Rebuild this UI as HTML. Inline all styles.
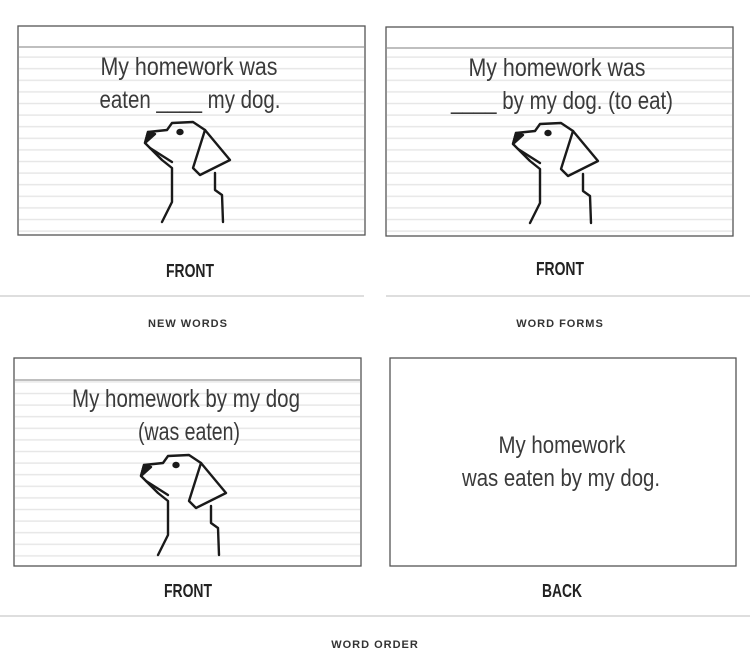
<!DOCTYPE html>
<html><head><meta charset="utf-8"><style>
html,body{margin:0;padding:0;background:#fff;}
svg{display:block}
.t{font-family:"Liberation Sans",sans-serif;fill:#3a3a3a;font-size:25px;text-anchor:middle}
.f{font-family:"Liberation Sans",sans-serif;font-weight:bold;fill:#222;font-size:18px;text-anchor:middle}
.s{font-family:"Liberation Sans",sans-serif;font-weight:bold;fill:#333;font-size:11px;text-anchor:middle;letter-spacing:1px}
.d{fill:none;stroke:#1a1a1a;stroke-width:2.4;stroke-linejoin:round;stroke-linecap:round}
</style></head><body>
<svg width="750" height="665" viewBox="0 0 750 665" xmlns="http://www.w3.org/2000/svg">
<defs>
<pattern id="ln" x="0" y="0" width="10" height="11.6" patternUnits="userSpaceOnUse">
<rect x="0" y="10" width="10" height="1.4" fill="#e6e6e6"/>
</pattern>
</defs>
<!-- card 1 -->
<rect x="18" y="26" width="347" height="209" fill="#fff" stroke="#555" stroke-width="1.3"/>
<rect x="19" y="48" width="345" height="186" fill="url(#ln)"/>
<line x1="19" y1="47" x2="364" y2="47" stroke="#aaa" stroke-width="1.5"/>
<text class="t" x="189" y="75" textLength="177" lengthAdjust="spacingAndGlyphs">My homework was</text>
<text class="t" x="190" y="108" textLength="181" lengthAdjust="spacingAndGlyphs">eaten ____ my dog.</text>
<g class="d">
<path d="M162 222 L172 202 L172 168 L162 160 L145 143 L148 132 L167 130 L172 123 L193 122 L205 130"/>
<path d="M205 130 L230 160 L200 175 L193 168 Z"/>
<path d="M215 173 L215 190 L222 195 L223 222"/>
<path d="M150 148 L172 162"/>
<path d="M145 143 L148 132 L155 134 Z" fill="#1a1a1a"/>
<ellipse cx="180" cy="132" rx="2.5" ry="2" fill="#1a1a1a"/>
</g>
<!-- card 2 -->
<rect x="386" y="27" width="347" height="209" fill="#fff" stroke="#555" stroke-width="1.3"/>
<rect x="387" y="49" width="345" height="186" fill="url(#ln)"/>
<line x1="387" y1="48" x2="732" y2="48" stroke="#aaa" stroke-width="1.5"/>
<text class="t" x="557" y="76" textLength="177" lengthAdjust="spacingAndGlyphs">My homework was</text>
<text class="t" x="562" y="109" textLength="222" lengthAdjust="spacingAndGlyphs">____ by my dog. (to eat)</text>
<g class="d" transform="translate(368,1)">
<path d="M162 222 L172 202 L172 168 L162 160 L145 143 L148 132 L167 130 L172 123 L193 122 L205 130"/>
<path d="M205 130 L230 160 L200 175 L193 168 Z"/>
<path d="M215 173 L215 190 L222 195 L223 222"/>
<path d="M150 148 L172 162"/>
<path d="M145 143 L148 132 L155 134 Z" fill="#1a1a1a"/>
<ellipse cx="180" cy="132" rx="2.5" ry="2" fill="#1a1a1a"/>
</g>
<text class="f" x="190" y="277" textLength="48" lengthAdjust="spacingAndGlyphs">FRONT</text>
<text class="f" x="560" y="275" textLength="48" lengthAdjust="spacingAndGlyphs">FRONT</text>
<rect x="0" y="295" width="364" height="2" fill="#dedede"/>
<rect x="386" y="295" width="364" height="2" fill="#dedede"/>
<text class="s" x="188" y="327">NEW WORDS</text>
<text class="s" x="560" y="327">WORD FORMS</text>
<!-- card 3 -->
<rect x="14" y="358" width="347" height="208" fill="#fff" stroke="#555" stroke-width="1.3"/>
<rect x="15" y="381" width="345" height="184" fill="url(#ln)"/>
<line x1="15" y1="380" x2="360" y2="380" stroke="#aaa" stroke-width="1.5"/>
<text class="t" x="186" y="407" textLength="228" lengthAdjust="spacingAndGlyphs">My homework by my dog</text>
<text class="t" x="189" y="440" textLength="102" lengthAdjust="spacingAndGlyphs">(was eaten)</text>
<g class="d" transform="translate(-4,333)">
<path d="M162 222 L172 202 L172 168 L162 160 L145 143 L148 132 L167 130 L172 123 L193 122 L205 130"/>
<path d="M205 130 L230 160 L200 175 L193 168 Z"/>
<path d="M215 173 L215 190 L222 195 L223 222"/>
<path d="M150 148 L172 162"/>
<path d="M145 143 L148 132 L155 134 Z" fill="#1a1a1a"/>
<ellipse cx="180" cy="132" rx="2.5" ry="2" fill="#1a1a1a"/>
</g>
<!-- card 4 -->
<rect x="390" y="358" width="346" height="208" fill="#fff" stroke="#555" stroke-width="1.3"/>
<text class="t" x="562" y="453" style="font-size:24px" textLength="127" lengthAdjust="spacingAndGlyphs">My homework</text>
<text class="t" x="561" y="486" style="font-size:24px" textLength="198" lengthAdjust="spacingAndGlyphs">was eaten by my dog.</text>
<text class="f" x="188" y="597" textLength="48" lengthAdjust="spacingAndGlyphs">FRONT</text>
<text class="f" x="562" y="597" textLength="40" lengthAdjust="spacingAndGlyphs">BACK</text>
<rect x="0" y="615" width="750" height="2" fill="#dedede"/>
<text class="s" x="375" y="648">WORD ORDER</text>
</svg>
</body></html>
